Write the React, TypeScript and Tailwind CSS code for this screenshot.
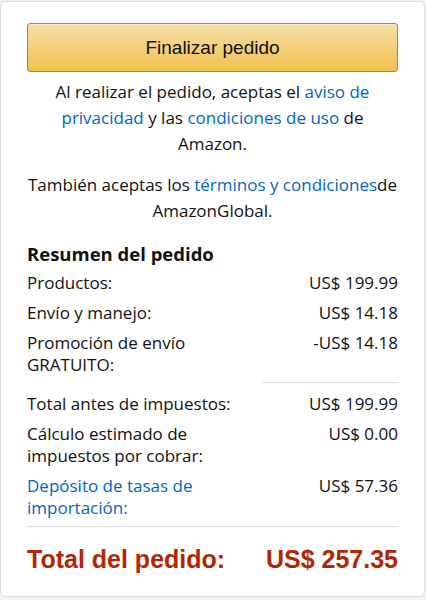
import React from "react";

const rows = [
  { label: "Productos:", value: "US$ 199.99" },
  { label: "Envío y manejo:", value: "US$ 14.18" },
  { label: "Promoción de envío GRATUITO:", value: "-US$ 14.18" },
];

const rows2 = [
  { label: "Total antes de impuestos:", value: "US$ 199.99" },
  { label: "Cálculo estimado de impuestos por cobrar:", value: "US$ 0.00" },
  { label: "Depósito de tasas de importación:", value: "US$ 57.36", link: true },
];

const Row = ({ label, value, link }: { label: string; value: string; link?: boolean }) => (
  <div className="flex justify-between">
    <span className={`w-[222px] ${link ? "text-[#0066c0]" : ""}`}>{label}</span>
    <span className="text-right">{value}</span>
  </div>
);

export default function App() {
  return (
    <div className="w-[426px] h-[600px] bg-[#f3f3f3] pt-[1px] overflow-hidden">
      <div
        className="w-[425px] h-[596px] bg-white border border-[#dddddd] rounded-[6px] px-[26px] pt-[21px] text-[#111111] text-[17px] leading-[22px]"
        style={{ fontFamily: '"Open Sans", "Noto Sans", sans-serif' }}
      >
        <button
          className="w-full h-[49px] rounded-[3px] border border-[#a88734] bg-gradient-to-b from-[#f7dfa5] to-[#f0c14b] text-[19px] text-[#111111] shadow-[inset_0_1px_0_rgba(255,255,255,0.4)]"
          style={{ fontFamily: '"Liberation Sans", Arial, sans-serif' }}
        >
          Finalizar pedido
        </button>

        <p className="text-center leading-[26px] mt-[7px] px-[2px]">
          Al realizar el pedido, aceptas el{" "}
          <span className="text-[#0066c0]">aviso de privacidad</span> y las{" "}
          <span className="text-[#0066c0]">condiciones de uso</span> de Amazon.
        </p>

        <p className="text-center leading-[26px] mt-[15px]">
          También aceptas los{" "}
          <span className="text-[#0066c0]">términos y condiciones</span>de AmazonGlobal.
        </p>

        <h3 className="font-bold text-[18.5px] leading-[24px] mt-[18px]">Resumen del pedido</h3>

        <div className="flex flex-col gap-[8px] mt-[6px]">
          {rows.map((r) => (
            <Row key={r.label} {...r} />
          ))}
        </div>

        <div className="flex justify-end mt-[6px]">
          <div className="w-[136px] border-t border-[#dddddd]" />
        </div>

        <div className="flex flex-col gap-[8px] mt-[10px]">
          {rows2.map((r) => (
            <Row key={r.label} {...r} />
          ))}
        </div>

        <div className="border-t border-[#dddddd] mt-[7px]" />

        <div
          className="flex justify-between font-bold text-[25px] leading-[30px] text-[#b12704] mt-[17px]"
          style={{ fontFamily: '"Liberation Sans", Arial, sans-serif' }}
        >
          <span>Total del pedido:</span>
          <span>US$ 257.35</span>
        </div>
      </div>
    </div>
  );
}
